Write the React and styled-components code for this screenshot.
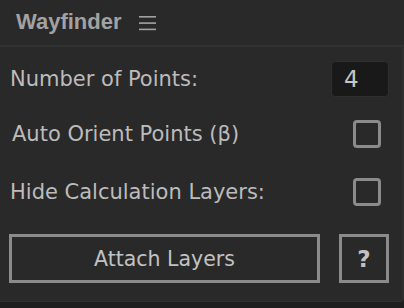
import React from "react";
import styled, { createGlobalStyle } from "styled-components";

const Global = createGlobalStyle`
  html, body { margin: 0; padding: 0; background: #1e1e1e; }
  body { font-family: "DejaVu Sans", "Liberation Sans", sans-serif; }
`;

const Frame = styled.div`
  width: 404px;
  height: 308px;
  background: #1e1e1e;
  display: flex;
  flex-direction: column;
  overflow: hidden;
`;

const Header = styled.header`
  height: 45px;
  flex: none;
  background: #292929;
  display: flex;
  align-items: center;
  padding-left: 16px;
  gap: 17px;
`;

const Title = styled.h1`
  margin: 0;
  font-family: "Liberation Sans", Arial, sans-serif;
  font-weight: 700;
  font-size: 22px;
  color: #a2a2a2;
  line-height: 1;
  padding-bottom: 1px;
`;

const Menu = styled.svg`
  display: block;
`;

const Panel = styled.section`
  flex: none;
  height: 257px;
  background: #292929;
  border-top: 2px solid #323232;
  border-right: 2px solid #2f2f2f;
  border-bottom: 1px solid #303030;
  border-radius: 0 0 4px 0;
  padding: 14px 14px 0 9px;
  box-sizing: border-box;
  display: flex;
  flex-direction: column;
`;

const Row = styled.div`
  display: flex;
  align-items: center;
  justify-content: space-between;
  height: ${(p) => p.$h}px;
  margin-top: ${(p) => p.$mt || 0}px;
`;

const Label = styled.span`
  font-size: 21px;
  color: #bcbcbc;
  padding-left: ${(p) => p.$indent || 1}px;
  line-height: 1;
`;

const NumberBox = styled.div`
  width: 58px;
  height: 36px;
  box-sizing: border-box;
  background: #191919;
  border: 1px solid #2f2f2f;
  border-radius: 4px;
  font-size: 23px;
  color: #c6c6c6;
  display: flex;
  align-items: center;
  padding-left: 12px;
  margin-right: -1px;
`;

const Check = styled.div`
  width: 28px;
  height: 28px;
  box-sizing: border-box;
  border: 3px solid #8b8b8b;
  border-radius: 4px;
  margin-right: 7px;
`;

const Buttons = styled.div`
  display: flex;
  gap: 19px;
  margin-top: 28px;
  margin-right: -1px;
  height: 49px;
`;

const Button = styled.button`
  width: ${(p) => p.$w}px;
  flex: none;
  height: 49px;
  box-sizing: border-box;
  background: transparent;
  border: 3px solid #8b8b8b;
  border-radius: 0;
  font-family: "DejaVu Sans", sans-serif;
  font-size: ${(p) => p.$fs || 20.5}px;
  font-weight: ${(p) => p.$fw || 400};
  color: #c2c2c2;
  display: flex;
  align-items: center;
  justify-content: center;
  padding: 0;
`;

export default function App() {
  return (
    <Frame>
      <Global />
      <Header>
        <Title>Wayfinder</Title>
        <Menu width="18" height="16" viewBox="0 0 18 16">
          <rect x="0" y="1" width="17" height="1.6" fill="#a2a2a2" />
          <rect x="0" y="7.3" width="17" height="1.6" fill="#a2a2a2" />
          <rect x="0" y="13.6" width="17" height="1.6" fill="#a2a2a2" />
        </Menu>
      </Header>
      <Panel>
        <Row $h={36}>
          <Label>Number of Points:</Label>
          <NumberBox>4</NumberBox>
        </Row>
        <Row $h={28} $mt={23}>
          <Label $indent={3}>Auto Orient Points (β)</Label>
          <Check />
        </Row>
        <Row $h={28} $mt={30}>
          <Label>Hide Calculation Layers:</Label>
          <Check />
        </Row>
        <Buttons>
          <Button $w={311}>Attach Layers</Button>
          <Button $w={50} $fw={700} $fs={23}>?</Button>
        </Buttons>
      </Panel>
    </Frame>
  );
}
